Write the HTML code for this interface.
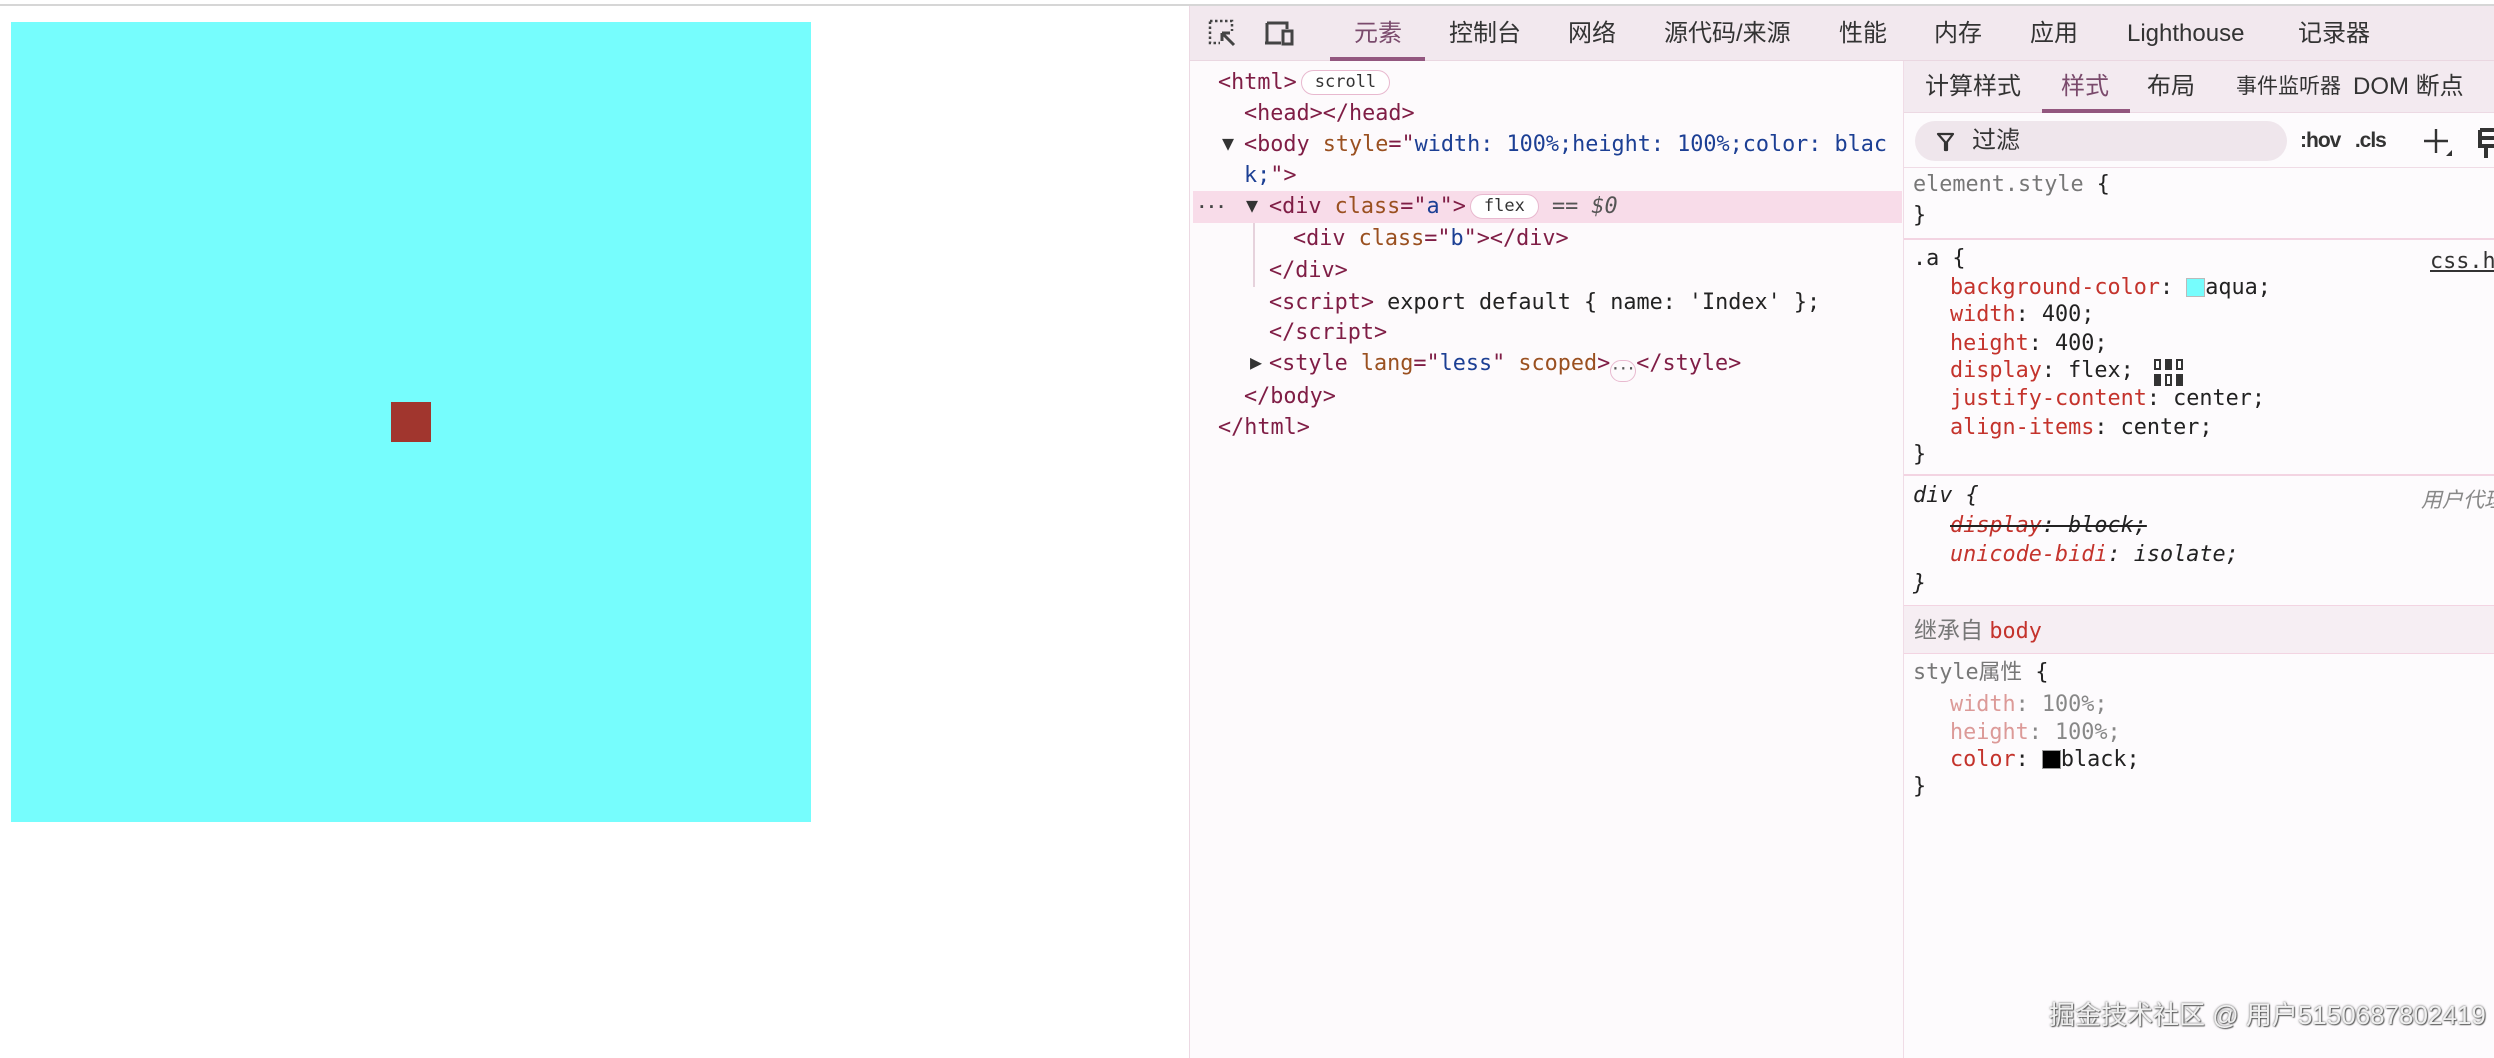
<!DOCTYPE html>
<html><head><meta charset="utf-8"><style>
*{margin:0;padding:0;box-sizing:border-box}
body{width:2494px;height:1058px;background:#fff;position:relative;overflow:hidden;font-family:"Liberation Sans","Noto Sans CJK SC",sans-serif}
.a{position:absolute}
.m{font-family:"DejaVu Sans Mono","Liberation Mono","Noto Sans CJK SC",monospace;white-space:pre}
.el{font-size:21.8px;line-height:31px;height:31px}
.st{font-size:21.8px;line-height:28px;height:28px}
.t{color:#7f1d45}.n{color:#9a5020}.v{color:#1c3f94}.k{color:#222}
.p{color:#c4332c}
.tab{position:absolute;top:17px;font-size:24px;color:#333;line-height:34px;white-space:nowrap}
.tab2{position:absolute;top:70px;font-size:24px;color:#333;line-height:34px;white-space:nowrap}
.pill{display:inline-block;border:1.5px solid #e8b9cf;background:#fff;border-radius:13px;font-size:17px;line-height:23px;padding:0 13px;color:#333;vertical-align:2px;margin-left:4px}
.tri{font-size:20px;color:#333}
</style></head><body>
<div class="a" style="left:0;top:4px;width:2494px;height:2px;background:#d6d6d6"></div>
<div class="a" style="left:11px;top:22px;width:800px;height:800px;background:#76fdfd"></div>
<div class="a" style="left:391px;top:402px;width:40px;height:40px;background:#a1362e"></div>

<div class="a" style="left:1189px;top:6px;width:1305px;height:1052px;background:#fdfafc;border-left:1.5px solid #ecd9e3"></div>
<div class="a" style="left:1190px;top:6px;width:1304px;height:55px;background:#f2e8ee;border-bottom:1px solid #ead7e1"></div>
<svg class="a" style="left:1208px;top:19px" width="30" height="30" viewBox="0 0 30 30"><rect x="2" y="2" width="22" height="22" fill="none" stroke="#444" stroke-width="2.5" stroke-dasharray="2.5 2.5"/><rect x="12" y="12" width="18" height="18" fill="#f2e8ee"/><path d="M14 14 L26 26 M14 14 L14 22 M14 14 L22 14" stroke="#444" stroke-width="3" fill="none"/></svg>
<svg class="a" style="left:1263px;top:21px" width="34" height="26" viewBox="0 0 34 26"><path d="M4 2 V22 M2 22 H18 M4 2 H24 V8" stroke="#444" stroke-width="3" fill="none"/><rect x="20" y="10" width="9" height="13" fill="none" stroke="#444" stroke-width="3"/></svg>
<div class="tab" style="left:1354px;color:#7a4a6c">元素</div>
<div class="a" style="left:1330px;top:57px;width:95px;height:4px;background:#93577f"></div>
<div class="tab" style="left:1449px">控制台</div>
<div class="tab" style="left:1568px">网络</div>
<div class="tab" style="left:1664px">源代码/来源</div>
<div class="tab" style="left:1839px">性能</div>
<div class="tab" style="left:1934px">内存</div>
<div class="tab" style="left:2030px">应用</div>
<div class="tab" style="left:2127px">Lighthouse</div>
<div class="tab" style="left:2298px">记录器</div>

<div class="a" style="left:1193px;top:191px;width:709px;height:32px;background:#f8dce9"></div>
<div class="a" style="left:1253px;top:223px;width:1.5px;height:64px;background:#e6d2dc"></div>
<div class="a m el" style="left:1197px;top:191px;color:#444;font-size:16px;font-weight:bold">···</div>
<div class="a m el" style="left:1218px;top:67px"><span class="t">&lt;html&gt;</span><span class="pill">scroll</span></div>
<div class="a m el" style="left:1244px;top:98px"><span class="t">&lt;head&gt;&lt;/head&gt;</span></div>
<div class="a m el tri" style="left:1222px;top:128px">▼</div>
<div class="a m el" style="left:1244px;top:129px"><span class="t">&lt;body </span><span class="n">style</span><span class="t">="</span><span class="v">width: 100%;height: 100%;color: blac</span></div>
<div class="a m el" style="left:1244px;top:160px"><span class="v">k;</span><span class="t">"&gt;</span></div>
<div class="a m el tri" style="left:1246px;top:190px">▼</div>
<div class="a m el" style="left:1269px;top:191px"><span class="t">&lt;div </span><span class="n">class</span><span class="t">="</span><span class="v">a</span><span class="t">"&gt;</span><span class="pill">flex</span><span style="color:#555"> == <i>$0</i></span></div>
<div class="a m el" style="left:1293px;top:223px"><span class="t">&lt;div </span><span class="n">class</span><span class="t">="</span><span class="v">b</span><span class="t">"&gt;&lt;/div&gt;</span></div>
<div class="a m el" style="left:1269px;top:255px"><span class="t">&lt;/div&gt;</span></div>
<div class="a m el" style="left:1269px;top:287px"><span class="t">&lt;script&gt;</span><span class="k"> export default { name: 'Index' };</span></div>
<div class="a m el" style="left:1269px;top:317px"><span class="t">&lt;/script&gt;</span></div>
<div class="a m el tri" style="left:1250px;top:347px">▶</div>
<div class="a m el" style="left:1269px;top:348px"><span class="t">&lt;style </span><span class="n">lang</span><span class="t">="</span><span class="v">less</span><span class="t">" </span><span class="n">scoped</span><span class="t">&gt;</span><span style="display:inline-block;width:26px;height:22px;border:1.5px solid #e8b9cf;border-radius:11px;font-size:13px;line-height:18px;text-align:center;vertical-align:-3px;color:#555;font-weight:bold">···</span><span class="t">&lt;/style&gt;</span></div>
<div class="a m el" style="left:1244px;top:381px"><span class="t">&lt;/body&gt;</span></div>
<div class="a m el" style="left:1218px;top:412px"><span class="t">&lt;/html&gt;</span></div>

<div class="a" style="left:1903px;top:61px;width:591px;height:997px;background:#fdfbfd;border-left:1.5px solid #f0dce6"></div>
<div class="a" style="left:1904px;top:61px;width:590px;height:52px;background:#f3eaf0;border-bottom:1px solid #ecd9e3"></div>
<div class="tab2" style="left:1925px">计算样式</div>
<div class="tab2" style="left:2061px;color:#7a4a6c">样式</div>
<div class="a" style="left:2042px;top:109px;width:88px;height:4px;background:#93577f"></div>
<div class="tab2" style="left:2147px">布局</div>
<div class="tab2" style="left:2236px;font-size:21px">事件监听器</div>
<div class="tab2" style="left:2353px">DOM 断点</div>
<div class="a" style="left:1915px;top:121px;width:372px;height:40px;background:#efe6ec;border-radius:20px"></div>
<svg class="a" style="left:1936px;top:131px" width="20" height="22" viewBox="0 0 20 22"><path d="M2 3 H17 L11 11 V19 L9 19 V11 Z" fill="none" stroke="#333" stroke-width="2.2" stroke-linejoin="round"/></svg>
<div class="a" style="left:1972px;top:124px;font-size:24px;color:#333;line-height:34px">过滤</div>
<div class="a" style="left:2300px;top:124px;font-size:21px;color:#333;line-height:34px;font-weight:bold;letter-spacing:-1px;white-space:nowrap">:hov&nbsp;&nbsp;&nbsp;.cls</div>
<svg class="a" style="left:2422px;top:126px" width="32" height="32" viewBox="0 0 32 32"><path d="M2 15 H26 M14 3 V27" stroke="#333" stroke-width="2.4"/><path d="M24 30 L30 24 V30 Z" fill="#333"/></svg>
<svg class="a" style="left:2478px;top:126px" width="16" height="34" viewBox="0 0 16 34"><path d="M2 4 H16 M2 4 V20 H16 M2 12 H16 M8 20 V32" stroke="#333" stroke-width="4" fill="none"/></svg>
<div class="a" style="left:1904px;top:167px;width:590px;height:1px;background:#f0dce6"></div>

<div class="a m st" style="left:1913px;top:171px"><span style="color:#777">element.style</span><span class="k"> {</span></div>
<div class="a m st" style="left:1913px;top:202px;color:#222">}</div>
<div class="a" style="left:1904px;top:238px;width:590px;height:1.5px;background:#f3d4e2"></div>
<div class="a m st" style="left:1913px;top:245px;color:#222">.a {</div>
<div class="a m st" style="left:2430px;top:248px;color:#333;text-decoration:underline">css.h</div>
<div class="a m st" style="left:1950px;top:274px"><span class="p">background-color</span><span class="k">: <span style="display:inline-block;width:19px;height:19px;background:#76fdfd;border:1px solid #bbb;vertical-align:-3px"></span>aqua;</span></div>
<div class="a m st" style="left:1950px;top:301px"><span class="p">width</span><span class="k">: 400;</span></div>
<div class="a m st" style="left:1950px;top:330px"><span class="p">height</span><span class="k">: 400;</span></div>
<div class="a m st" style="left:1950px;top:357px"><span class="p">display</span><span class="k">: flex; </span></div>
<svg class="a" style="left:2154px;top:359px" width="30" height="27" viewBox="0 0 30 27"><g fill="#333"><rect x="0" y="0" width="7" height="11"/><rect x="11" y="0" width="7" height="11"/><rect x="22" y="0" width="7" height="11"/><rect x="0" y="15" width="7" height="12"/><rect x="11" y="15" width="7" height="12"/><rect x="22" y="15" width="7" height="12"/></g><g fill="#fff"><rect x="2" y="2" width="3" height="7"/><rect x="13" y="17" width="3" height="8"/><rect x="24" y="2" width="3" height="7"/></g></svg>
<div class="a m st" style="left:1950px;top:385px"><span class="p">justify-content</span><span class="k">: center;</span></div>
<div class="a m st" style="left:1950px;top:414px"><span class="p">align-items</span><span class="k">: center;</span></div>
<div class="a m st" style="left:1913px;top:441px;color:#222">}</div>
<div class="a" style="left:1904px;top:474px;width:590px;height:1.5px;background:#f3d4e2"></div>
<div class="a m st" style="left:1913px;top:482px;color:#222;font-style:italic">div {</div>
<div class="a" style="left:2421px;top:487px;font-size:21px;color:#888;font-style:italic;line-height:28px;white-space:nowrap">用户代理</div>
<div class="a m st" style="left:1950px;top:512px;font-style:italic;text-decoration:line-through;text-decoration-color:#222"><span class="p">display</span><span class="k">: block;</span></div>
<div class="a m st" style="left:1950px;top:541px;font-style:italic"><span class="p">unicode-bidi</span><span class="k">: isolate;</span></div>
<div class="a m st" style="left:1913px;top:570px;color:#222;font-style:italic">}</div>
<div class="a" style="left:1904px;top:605px;width:590px;height:49px;background:#f6eef3;border-top:1.5px solid #f3d4e2;border-bottom:1.5px solid #f3d4e2"></div>
<div class="a" style="left:1914px;top:615px;font-size:23px;line-height:30px;color:#777">继承自 <span class="m" style="color:#c4332c;font-size:21.8px">body</span></div>
<div class="a m st" style="left:1913px;top:659px"><span style="color:#777">style属性</span><span class="k"> {</span></div>
<div class="a m st" style="left:1950px;top:691px"><span style="color:#dc9a98">width</span><span style="color:#888">: 100%;</span></div>
<div class="a m st" style="left:1950px;top:719px"><span style="color:#dc9a98">height</span><span style="color:#888">: 100%;</span></div>
<div class="a m st" style="left:1950px;top:746px"><span class="p">color</span><span class="k">: <span style="display:inline-block;width:19px;height:19px;background:#000;border:1px solid #999;vertical-align:-3px"></span>black;</span></div>
<div class="a m st" style="left:1913px;top:773px;color:#222">}</div>

<div class="a" style="left:2049px;top:998px;font-size:26px;line-height:34px;color:#f0f0f0;white-space:nowrap;text-shadow:0 0 2px #555,1px 1px 1px #666">掘金技术社区 @ 用户5150687802419</div>
</body></html>
